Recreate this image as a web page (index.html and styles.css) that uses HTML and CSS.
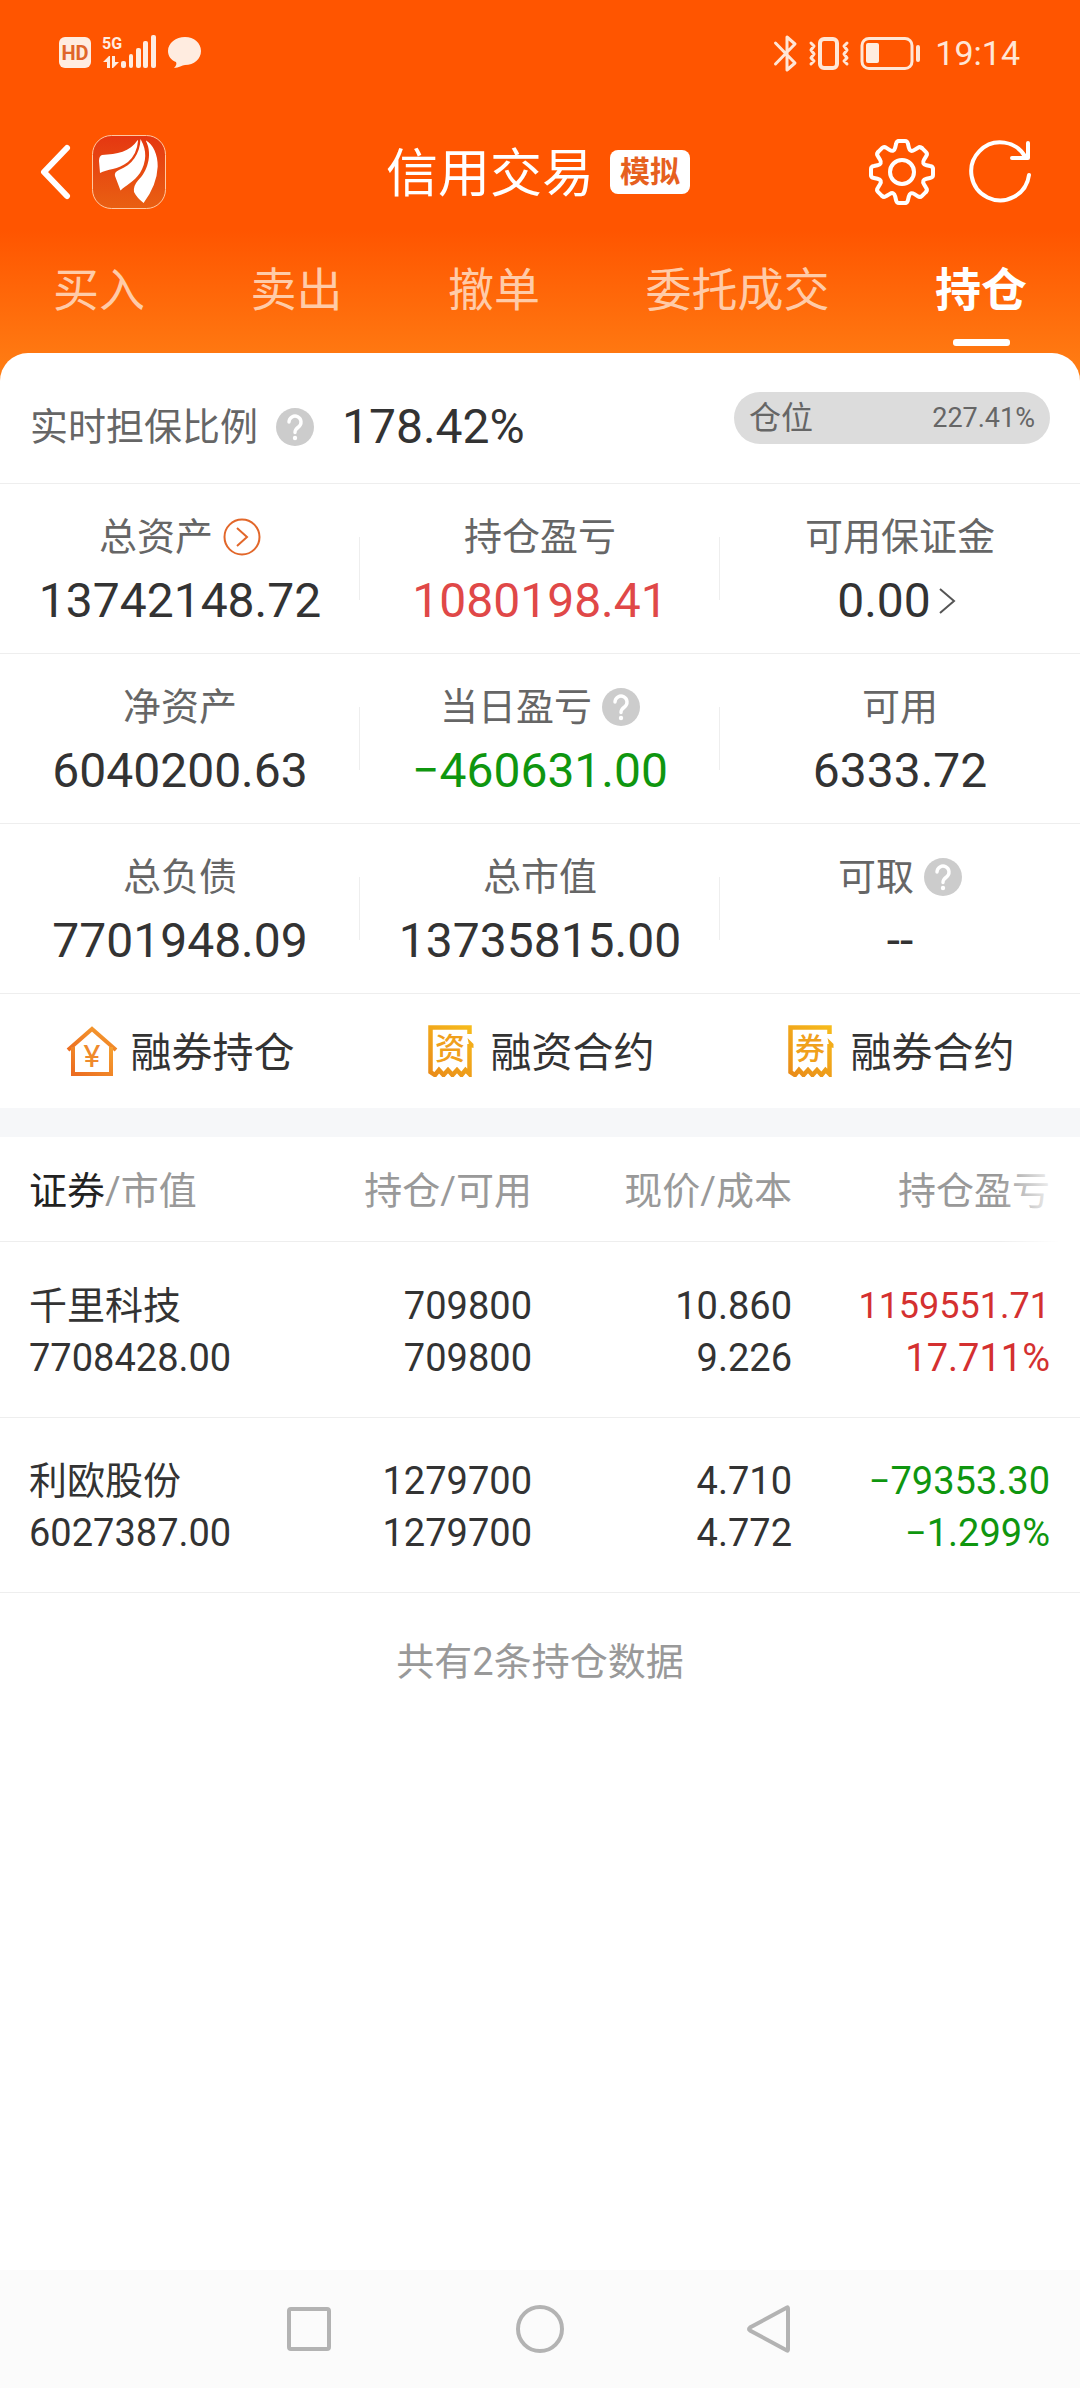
FILE: index.html
```html
<!DOCTYPE html>
<html lang="zh-CN">
<head>
<meta charset="utf-8">
<meta name="viewport" content="width=device-width, initial-scale=1">
<title>信用交易</title>
<link rel="stylesheet" href="styles.css">
</head>
<body>
<svg class="defs" width="0" height="0" aria-hidden="true">
  <defs>
    <linearGradient id="logo-bg" x1="0" y1="0" x2="0" y2="1"><stop offset="0" stop-color="#e53711"/><stop offset="1" stop-color="#e96012"/></linearGradient>
    <linearGradient id="house" x1="1" y1="0" x2="0" y2="1"><stop offset="0" stop-color="#f5a030"/><stop offset="1" stop-color="#ec6c20"/></linearGradient>
    <linearGradient id="slip" gradientUnits="userSpaceOnUse" x1="46" y1="0" x2="4" y2="52"><stop offset="0" stop-color="#f7bd1c"/><stop offset="1" stop-color="#e98a18"/></linearGradient>
    <symbol id="help" viewBox="0 0 38 38">
      <circle cx="19" cy="19" r="19" fill="#ccc"/>
      <path d="M13 14a6 6 0 1 1 9.500 5Q19 21.500 19 24.500" fill="none" stroke="#fff" stroke-width="3.400" stroke-linecap="round"/>
      <circle cx="19" cy="30" r="2.200" fill="#fff"/>
    </symbol>
    <symbol id="slip-frame" viewBox="0 0 52 52">
      <path d="M43.500 9V2.500H4.500V47l4.500 3 4-5 4.500 5 4.500-5 4.500 5 4.500-5 4.500 5 4-5 4 4V19" fill="none" stroke="url(#slip)" stroke-width="4.500"/>
      <path d="M41.500 13l6 6v4l-4-1z" fill="#f3ac1a"/>
    </symbol>
  </defs>
</svg>

<div class="app">
  <header class="top">
    <div class="status">
      <div class="status-group">
        <svg width="144" height="40" viewBox="58 34 144 40" fill="#ffece0" aria-hidden="true">
          <rect x="59" y="38" width="32" height="31" rx="6"/>
          <text x="75" y="61" class="status-hd" text-anchor="middle">HD</text>
          <text x="112" y="50" class="status-net" text-anchor="middle">5G</text>
          <path d="M103 63l6-6h1v12h-3v-6zM112 57h3v6h4l-6 6h-1z"/>
          <rect x="121" y="62" width="5" height="7" rx="2"/>
          <rect x="129" y="55" width="4" height="14" rx="2"/>
          <rect x="136" y="49" width="5" height="20" rx="2"/>
          <rect x="143" y="42" width="5" height="27" rx="2"/>
          <rect x="151" y="36" width="5" height="33" rx="2"/>
          <path d="M185 38c9 0 16 6 16 14s-7 14-16 14c-3 0-6 3-11 3 2-2 3-4 2-6-5-2-8-6-8-11 0-8 8-14 17-14z"/>
        </svg>
      </div>
      <div class="status-group">
        <svg width="150" height="40" viewBox="775 33 150 40" fill="none" stroke="#ffe6d6" stroke-width="3" stroke-linecap="round" stroke-linejoin="round" aria-hidden="true">
          <path d="M777.500 43l19.500 20-8 7V37l8 7-19.500 20"/>
          <rect x="822" y="39" width="17" height="29" rx="4" stroke-width="4"/>
          <path d="M813 43l3 3-3 4 3 4-3 4 3 3-3 3M849 43l-3 3 3 4-3 4 3 4-3 3 3 3"/>
          <rect x="864" y="38.500" width="50" height="30" rx="7"/>
          <path d="M920 47v13" stroke-width="4"/>
          <rect x="868" y="43" width="13" height="20" rx="2" fill="#ffece0" stroke="none"/>
        </svg>
        <time class="clock">19:14</time>
      </div>
    </div>

    <div class="appbar">
      <div class="appbar-left">
        <button class="icon-btn" type="button" aria-label="返回">
          <svg width="32" height="56" viewBox="0 0 32 56" fill="none" stroke="#fff" stroke-width="6" stroke-linecap="round" stroke-linejoin="round"><path d="M28 4L5 28l23 24"/></svg>
        </button>
        <a class="logo" href="#" aria-label="首页">
          <svg width="74" height="74" viewBox="0 0 74 74">
            <rect x="0.500" y="0.500" width="73" height="73" rx="19" fill="url(#logo-bg)" stroke="#ffc8a0"/>
            <g fill="#fff">
              <path d="M45.700 5C38 17 25 19 10 20Q7 21 7 26L8 38C15 34 26 35 36 27Q45 19 46 6z"/>
              <path d="M48.500 4C48 19 40 30 27 35Q22 37 23 41L28.500 55.500C34 50 42 47 48 38Q58 21 49 5z"/>
              <path d="M54 5.500C61 9 66 20 65.700 31.500Q65 50 51.600 68Q45 63 42 57Q41 51 46 45.500C55 37 61 20 54 6z"/>
            </g>
          </svg>
        </a>
      </div>
      <div class="title-group">
        <h1 class="title">信用交易</h1>
        <span class="badge">模拟</span>
      </div>
      <div class="appbar-right">
        <button class="icon-btn" type="button" aria-label="设置">
          <svg width="68" height="68" viewBox="-34 -34 68 68" fill="none" stroke="#fff" stroke-width="4" stroke-linecap="round">
            <path id="tooth" d="M-3-31H3Q5.500-31 6-28L6.800-24.500Q8-19.300 12.500-22.100L15.600-24Q18-25.800 19.800-24"/>
            <use href="#tooth" transform="rotate(45)"/><use href="#tooth" transform="rotate(90)"/><use href="#tooth" transform="rotate(135)"/><use href="#tooth" transform="rotate(180)"/><use href="#tooth" transform="rotate(225)"/><use href="#tooth" transform="rotate(270)"/><use href="#tooth" transform="rotate(315)"/>
            <circle r="12"/>
          </svg>
        </button>
        <button class="icon-btn" type="button" aria-label="刷新">
          <svg width="66" height="66" viewBox="-33 -33 66 66" fill="none" stroke="#fff" stroke-width="4" stroke-linecap="round" stroke-linejoin="round"><path d="M29 3A29 29 0 1 1 26-14M28-29V-14H12"/></svg>
        </button>
      </div>
    </div>

    <nav class="tabs">
      <a class="tab" href="#">买入</a>
      <a class="tab" href="#">卖出</a>
      <a class="tab" href="#">撤单</a>
      <a class="tab" href="#">委托成交</a>
      <a class="tab tab-active" href="#" aria-current="page">持仓</a>
    </nav>
  </header>

  <main class="sheet">
    <section class="ratio">
      <div class="ratio-main">
        <span class="label">实时担保比例</span>
        <button class="icon-btn" type="button" aria-label="说明"><svg class="help-icon"><use href="#help"/></svg></button>
        <span class="value">178.42%</span>
      </div>
      <div class="position-pill"><span class="pill-name">仓位</span><span class="pill-value">227.41%</span></div>
    </section>

    <section class="stats">
      <div class="stat">
        <div class="label">总资产
          <button class="icon-btn" type="button" aria-label="总资产详情"><svg width="38" height="38" viewBox="0 0 38 38" fill="none" stroke="#e2672a" stroke-width="2"><circle cx="19" cy="19" r="17.500"/><path d="M14 10l10 9-10 9"/></svg></button>
        </div>
        <div class="value">13742148.72</div>
      </div>
      <div class="stat"><div class="label">持仓盈亏</div><div class="value value-up">1080198.41</div></div>
      <div class="stat">
        <div class="label">可用保证金</div>
        <a class="value" href="#">0.00<svg width="24" height="28" viewBox="0 0 24 28" fill="none" stroke="#555" stroke-width="2"><path d="M1 2l14 12L1 26"/></svg></a>
      </div>
      <div class="stat"><div class="label">净资产</div><div class="value">6040200.63</div></div>
      <div class="stat">
        <div class="label">当日盈亏
          <button class="icon-btn" type="button" aria-label="说明"><svg class="help-icon"><use href="#help"/></svg></button>
        </div>
        <div class="value value-down">−460631.00</div>
      </div>
      <div class="stat"><div class="label">可用</div><div class="value">6333.72</div></div>
      <div class="stat"><div class="label">总负债</div><div class="value">7701948.09</div></div>
      <div class="stat"><div class="label">总市值</div><div class="value">13735815.00</div></div>
      <div class="stat">
        <div class="label">可取
          <button class="icon-btn" type="button" aria-label="说明"><svg class="help-icon"><use href="#help"/></svg></button>
        </div>
        <div class="value">--</div>
      </div>
    </section>

    <nav class="actions">
      <a class="action" href="#">
        <svg width="52" height="52" viewBox="0 0 52 52"><g fill="none" stroke="url(#house)" stroke-width="4"><path d="M2 25L26 4l24 21"/><path d="M7 22V49H45V22"/></g><text x="26" y="42" text-anchor="middle" class="icon-yen">¥</text></svg>
        融券持仓
      </a>
      <a class="action" href="#">
        <svg width="52" height="52" viewBox="0 0 52 52"><use href="#slip-frame"/><text x="24" y="34" text-anchor="middle" class="icon-char">资</text></svg>
        融资合约
      </a>
      <a class="action" href="#">
        <svg width="52" height="52" viewBox="0 0 52 52"><use href="#slip-frame"/><text x="24" y="34" text-anchor="middle" class="icon-char">券</text></svg>
        融券合约
      </a>
    </nav>

    <table class="holdings">
      <thead>
        <tr>
          <th scope="col"><span class="sorted">证券</span>/市值</th>
          <th scope="col">持仓/可用</th>
          <th scope="col">现价/成本</th>
          <th scope="col" class="fading">持仓盈亏</th>
        </tr>
      </thead>
      <tbody>
        <tr>
          <td>千里科技<br>7708428.00</td>
          <td>709800<br>709800</td>
          <td>10.860<br>9.226</td>
          <td class="gain"><span class="fit">1159551.71</span><br>17.711%</td>
        </tr>
        <tr>
          <td>利欧股份<br>6027387.00</td>
          <td>1279700<br>1279700</td>
          <td>4.710<br>4.772</td>
          <td class="loss">−79353.30<br>−1.299%</td>
        </tr>
      </tbody>
    </table>
    <p class="summary">共有2条持仓数据</p>
  </main>

  <footer class="sysnav">
    <button class="icon-btn" type="button" aria-label="最近任务"><svg width="48" height="48" viewBox="0 0 48 48"><rect x="4" y="4" width="40" height="40" rx="2"/></svg></button>
    <button class="icon-btn" type="button" aria-label="主屏幕"><svg width="48" height="48" viewBox="0 0 48 48"><circle cx="24" cy="24" r="22"/></svg></button>
    <button class="icon-btn" type="button" aria-label="返回"><svg width="48" height="48" viewBox="0 0 48 48"><path d="M40 2.500Q41 2 41 4V44Q41 46 40 45.500L3 25.500Q1 24 3 22.500z"/></svg></button>
  </footer>
</div>
</body>
</html>
```

FILE: styles.css
```css
* {
  box-sizing: border-box;
}

body {
  margin: 0;
  font-family: Roboto, "Noto Sans CJK SC", sans-serif;
  font-size: 38px;
  line-height: 56px;
  color: #333;
}

a {
  color: inherit;
  text-decoration: none;
}

svg {
  display: block;
  flex: none;
}

.defs {
  position: absolute;
}

.icon-btn {
  display: block;
  padding: 0;
  border: 0;
  background: none;
}

.app {
  display: flex;
  flex-direction: column;
  min-height: 100vh;
  background: linear-gradient(#ff5500 230px, #ff8015 382px);
}

/* Status bar */
.status {
  display: flex;
  justify-content: space-between;
  align-items: center;
  height: 106px;
  padding: 0 60px 0 58px;
}

.status-group {
  display: flex;
  align-items: center;
  gap: 12px;
}

.clock {
  font-size: 34px;
  color: #ffe6d6;
}

.status-hd {
  font-size: 20px;
  font-weight: 700;
  fill: #e0652a;
}

.status-net {
  font-size: 16px;
  font-weight: 700;
}

/* Title bar */
.appbar {
  display: grid;
  grid-template-columns: 1fr auto 1fr;
  align-items: center;
  height: 132px;
  padding: 0 47px 0 39px;
}

.appbar-left {
  display: flex;
  align-items: center;
  gap: 21px;
}

.appbar-right {
  display: flex;
  align-items: center;
  justify-content: flex-end;
  gap: 31px;
}

.title-group {
  display: flex;
  align-items: center;
  gap: 16px;
  padding-left: 4px;
}

.title {
  margin: 0;
  padding-top: 6px;
  font-size: 52px;
  font-weight: 400;
  color: #fff;
}

.badge {
  padding: 0 10px;
  border-radius: 8px;
  background: #fff;
  color: #e6601e;
  font-size: 30px;
  font-weight: 700;
  line-height: 44px;
}

/* Tabs */
.tabs {
  display: flex;
  justify-content: space-between;
  padding: 22px 53px 7px;
}

.tab {
  display: flex;
  flex-direction: column;
  align-items: center;
  gap: 19px;
  font-size: 46px;
  line-height: 60px;
  color: #ffcba8;
}

.tab::after {
  content: "";
  width: 57px;
  height: 7px;
  border-radius: 3px;
}

.tab-active {
  font-weight: 700;
  color: #fff;
}

.tab-active::after {
  background: #fff;
}

/* Sheet */
.sheet {
  flex: 1;
  border-radius: 28px 28px 0 0;
  background: #fff;
}

.label {
  display: flex;
  justify-content: center;
  align-items: center;
  gap: 10px;
  color: #666;
}

.value {
  display: flex;
  justify-content: center;
  align-items: center;
  gap: 8px;
  font-size: 48px;
}

.value-up {
  color: #e04848;
}

.value-down {
  color: #0f960f;
}

.help-icon {
  width: 38px;
  height: 38px;
}

.ratio {
  display: flex;
  justify-content: space-between;
  align-items: center;
  height: 131px;
  padding: 0 30px;
  border-bottom: 1px solid #eee;
}

.ratio-main {
  display: flex;
  align-items: center;
  gap: 18px;
  padding-top: 18px;
}

.ratio-main .value {
  padding-left: 10px;
}

.position-pill {
  display: flex;
  justify-content: space-between;
  align-items: center;
  flex: 0 0 316px;
  padding: 0 15px;
  border-radius: 26px;
  background: #dcdcdc;
  color: #666;
  line-height: 52px;
}

.pill-name {
  font-size: 32px;
}

.pill-value {
  font-size: 27px;
}

/* Account figures */
.stats {
  display: grid;
  grid-template-columns: repeat(3, 1fr);
}

.stat {
  display: flex;
  flex-direction: column;
  gap: 8px;
  padding: 25px 0 24px;
  border-bottom: 1px solid #eee;
  background: linear-gradient(#eee, #eee) right 53px / 1px 63px no-repeat;
}

.stat:nth-child(3n) {
  background: none;
}

/* Shortcuts */
.actions {
  display: grid;
  grid-template-columns: repeat(3, 1fr);
  border-bottom: 29px solid #f6f7f9;
}

.action {
  display: flex;
  justify-content: center;
  align-items: flex-start;
  gap: 13px;
  padding: 31px 0 27px;
  font-size: 41px;
}

.icon-yen {
  font-size: 32px;
  fill: #ef8a2c;
}

.icon-char {
  font-size: 30px;
  font-weight: 500;
  fill: #f0a01c;
}

/* Holdings */
.holdings {
  width: 100%;
  table-layout: fixed;
  border-collapse: separate;
  border-spacing: 0;
  text-align: right;
}

.holdings th,
.holdings td {
  padding: 37px 0 33px;
  border-bottom: 1px solid #eee;
  line-height: 52px;
}

.holdings th {
  width: 260px;
  padding: 28px 0 24px;
  font-weight: 400;
  color: #999;
}

.holdings th:first-child {
  width: auto;
}

.holdings th:last-child {
  width: 288px;
}

.holdings tr > :first-child {
  padding-left: 29px;
  text-align: left;
}

.holdings tr > :last-child {
  padding-right: 30px;
}

.sorted {
  color: #222;
}

.fading {
  position: relative;
}

.fading::after {
  content: "";
  position: absolute;
  inset: 0 0 -1px auto;
  width: 80px;
  background: linear-gradient(to right, transparent, #fff 60px);
}

.gain {
  color: #d43030;
}

.loss {
  color: #0f960f;
}

.fit {
  font-size: 36px;
}

.summary {
  margin: 0;
  padding: 41px 0;
  text-align: center;
  color: #999;
}

/* System navigation */
.sysnav {
  display: flex;
  justify-content: center;
  align-items: center;
  gap: 183px;
  height: 118px;
  background: #fbfbfb;
}

.sysnav svg {
  fill: none;
  stroke: #b3b3b3;
  stroke-width: 4px;
}
```
